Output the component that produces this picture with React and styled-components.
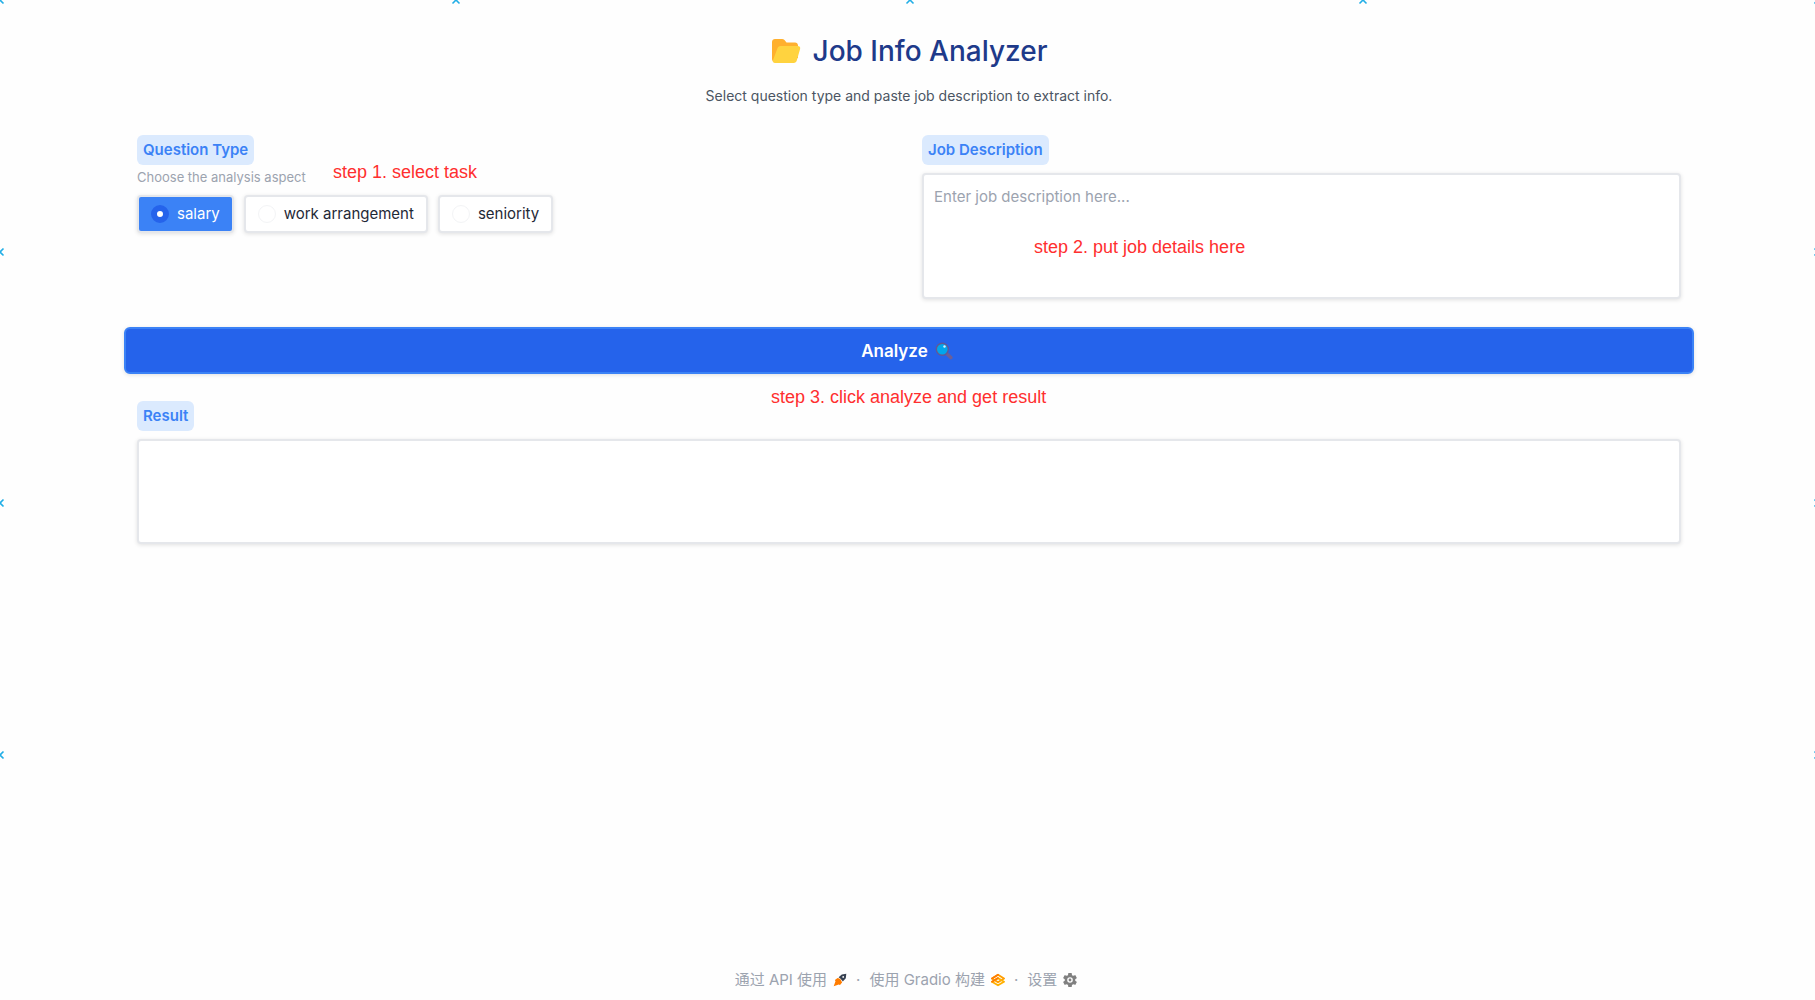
import React, { useState } from "react";
import styled, { createGlobalStyle } from "styled-components";

const GlobalStyle = createGlobalStyle`
  *, *::before, *::after { box-sizing: border-box; }
  body {
    margin: 0;
    background: #fefefe;
    color: #1f2937;
    font-family: Inter, "Noto Sans CJK SC", sans-serif;
    font-size: 15px;
    line-height: 20px;
  }
`;

const Page = styled.div`
  position: relative;
  overflow: hidden;
  min-height: 100vh;
  display: flex;
  flex-direction: column;
  padding: 33px 121px 9px 124px;
`;

const Header = styled.header`
  display: flex;
  flex-direction: column;
  align-items: center;
  gap: 19px;
`;

const Title = styled.h1`
  display: flex;
  align-items: center;
  gap: 12px;
  margin: 0;
  color: #1e3a8a;
  font-size: 28px;
  font-weight: 500;
  line-height: 36px;
`;

const Subtitle = styled.p`
  margin: 0;
  color: #4b5563;
  font-size: 14px;
  line-height: 16px;
`;

const Main = styled.main`
  flex: 1;
  display: flex;
  flex-direction: column;
  margin-top: 31px;
`;

const Columns = styled.div`
  display: grid;
  grid-template-columns: 1fr 1fr;
`;

const Panel = styled.div`
  position: relative;
  display: flex;
  flex-direction: column;
  gap: 8px;
  padding: 0 13px;
`;

const Choices = styled.fieldset`
  position: relative;
  min-width: 0;
  margin: 0;
  padding: 0 13px;
  border: 0;
`;

const badge = `
  width: fit-content;
  padding: 5px 6px;
  border-radius: 6px;
  background: #dbeafe;
  color: #3b82f6;
  font-size: 15px;
  font-weight: 600;
  line-height: 20px;
`;

const Legend = styled.legend`
  ${badge}
`;

const Label = styled.label`
  ${badge}
`;

const Hint = styled.p`
  margin: 2px 0 8px;
  color: #9ca3af;
  font-size: 13px;
  line-height: 20px;
`;

const Options = styled.div`
  display: flex;
  flex-wrap: wrap;
  gap: 10px;
`;

const Option = styled.label`
  display: flex;
  align-items: center;
  gap: 8px;
  height: 38px;
  padding: 0 12px;
  border: 2px solid #e5e7eb;
  border-radius: 4px;
  background: ${(p) => (p.$selected ? "#3b82f6" : "#ffffff")};
  color: ${(p) => (p.$selected ? "#ffffff" : "#1f2937")};
  box-shadow: 0 1px 4px rgba(0, 0, 0, 0.12);
  cursor: pointer;
`;

const Radio = styled.input`
  appearance: none;
  width: 18px;
  height: 18px;
  margin: 0;
  border: 1px solid #f3f4f6;
  border-radius: 50%;
  background: #ffffff;

  &:checked {
    border: 6px solid #2563eb;
  }
`;

const TextBox = styled.textarea`
  display: block;
  width: 100%;
  height: ${(p) => p.$height}px;
  padding: 12px 10px;
  border: 2px solid #e5e7eb;
  border-radius: 4px;
  outline: none;
  resize: none;
  background: #ffffff;
  color: #1f2937;
  box-shadow: 0 1px 4px rgba(0, 0, 0, 0.12);
  font: inherit;

  &::placeholder {
    color: #9ca3af;
    opacity: 1;
  }
`;

const AnalyzeButton = styled.button`
  display: flex;
  align-items: center;
  justify-content: center;
  gap: 7px;
  width: 100%;
  height: 47px;
  margin: 28px 0 27px;
  padding: 0 4px 0 0;
  border: 2px solid #3b82f6;
  border-radius: 6px;
  background: #2563eb;
  color: #ffffff;
  box-shadow: 0 1px 4px rgba(0, 0, 0, 0.12);
  font: inherit;
  font-size: 17px;
  font-weight: 600;
  cursor: pointer;
`;

const Note = styled.span`
  position: absolute;
  top: ${(p) => p.$top}px;
  left: ${(p) => p.$left};
  color: #ff2f2f;
  font-family: "Liberation Sans", Arial, sans-serif;
  font-size: 18px;
  line-height: 20px;
  white-space: nowrap;
  pointer-events: none;
`;

const Footer = styled.footer`
  display: flex;
  justify-content: center;
  align-items: center;
  gap: 9px;
  padding-right: 6px;
  color: #9ca3af;
  line-height: 22px;
`;

const FooterLink = styled.a`
  display: flex;
  align-items: center;
  gap: 6px;
  color: inherit;
  text-decoration: none;
`;

const Mark = styled.svg`
  position: absolute;
  top: ${(p) => p.$y}%;
  left: ${(p) => p.$x}%;
  width: 10px;
  height: 10px;
  margin: -5px 0 0 -5px;
  pointer-events: none;
`;

const marks = [
  [0, 0], [25.1, 0], [50.14, 0], [75.09, 0], [100.15, 0],
  [0, 25.2], [0, 50.3], [0, 75.5],
  [100.15, 25.2], [100.15, 50.3], [100.15, 75.5],
];

const FolderIcon = () => (
  <svg width="30" height="26" viewBox="0 0 30 26" aria-hidden="true">
    <path d="M4 1h7c1 0 1.800.4 2.500 1.100L15.500 4.500H24c1.700 0 3 1.300 3 3V20L4 24c-1.600 0-3-1.300-3-3V4c0-1.700 1.300-3 3-3Z" fill="#ffb02e" />
    <path d="M9.500 8h17.200c1.800 0 2.900 1.300 2.400 3l-3.300 11.500c-.4 1.500-1.500 2.500-3.100 2.500H4c-1.500 0-2.500-1-2.200-2.200L6.400 10.400C6.900 8.900 8 8 9.500 8Z" fill="#ffd33f" />
  </svg>
);

const SearchIcon = () => (
  <svg width="18" height="18" viewBox="0 0 18 18" aria-hidden="true">
    <path d="m11.300 11.300 4.500 4.200" stroke="#6b5f98" strokeWidth="3.600" strokeLinecap="round" />
    <circle cx="7.300" cy="7.300" r="6" fill="#00a6ed" stroke="#635994" strokeWidth="1.400" />
    <circle cx="9.500" cy="4.500" r="1.200" fill="#d8f2ff" />
  </svg>
);

const RocketIcon = () => (
  <svg width="14" height="14" viewBox="0 0 14 14" aria-hidden="true">
    <path d="M13.300.7 8.800 1.400 5.600 4.300 7 5.200l1.900 2L9.800 8.500l3-3.300Z" fill="#374151" />
    <circle cx="10.200" cy="3.900" r=".9" fill="#ffffff" />
    <path d="M4.600 4.900 1.900 7l.6 1.300L.7 13.300l5-1.700 1.300.5 2.100-2.700-1.300-2.700-1.500-1.300Z" fill="#ff7c00" />
  </svg>
);

const GradioIcon = () => (
  <svg width="14" height="14" viewBox="0 0 14 14" fill="none" aria-hidden="true">
    <path d="m1 5.500 6-3.700 6 3.700-6 3.700Z" stroke="#ff9d00" strokeWidth="1.900" strokeLinejoin="round" />
    <path d="m1 8.700 6 3.500 6-3.500-6-3.600Z" stroke="#ffb000" strokeWidth="1.900" strokeLinejoin="round" />
    <path d="m1 5.500 6-3.700M1 8.700 7 5.100" stroke="#ff7c00" strokeWidth="1.700" strokeLinecap="round" />
  </svg>
);

const GearIcon = () => (
  <svg width="14" height="14" viewBox="2 2 20 20" aria-hidden="true">
    <path fill="#808080" fillRule="evenodd" d="M19.430 12.980c.04-.32.07-.64.07-.98s-.03-.66-.07-.98l2.110-1.650c.19-.15.24-.42.12-.64l-2-3.460c-.12-.22-.39-.3-.61-.22l-2.490 1c-.52-.4-1.080-.73-1.690-.98l-.38-2.650A.5.5 0 0 0 14 2h-4a.5.5 0 0 0-.49.420l-.38 2.650c-.61.250-1.170.590-1.690.98l-2.490-1a.5.5 0 0 0-.61.220l-2 3.460c-.13.220-.07.490.12.640l2.110 1.650c-.04.320-.07.650-.07.980s.03.660.07.980l-2.110 1.650a.5.5 0 0 0-.12.640l2 3.460c.12.220.39.300.61.220l2.490-1c.52.400 1.080.730 1.690.980l.38 2.650c.03.240.24.420.49.420h4c.25 0 .46-.18.49-.42l.38-2.650c.61-.25 1.170-.59 1.690-.98l2.490 1c.23.090.49 0 .61-.22l2-3.460a.5.5 0 0 0-.12-.64ZM12 16a4 4 0 1 1 0-8 4 4 0 0 1 0 8Z" />
    <circle cx="12" cy="12" r="2" fill="#808080" />
  </svg>
);

const tasks = ["salary", "work arrangement", "seniority"];

export default function App() {
  const [task, setTask] = useState("salary");
  const [description, setDescription] = useState("");

  return (
    <Page>
      <GlobalStyle />
      <Header>
        <Title>
          <FolderIcon />
          Job Info Analyzer
        </Title>
        <Subtitle>Select question type and paste job description to extract info.</Subtitle>
      </Header>

      <Main>
        <Columns>
          <Choices>
            <Legend>Question Type</Legend>
            <Hint>Choose the analysis aspect</Hint>
            <Options>
              {tasks.map((name) => (
                <Option key={name} $selected={task === name}>
                  <Radio
                    type="radio"
                    name="task"
                    value={name}
                    checked={task === name}
                    onChange={() => setTask(name)}
                  />
                  {name}
                </Option>
              ))}
            </Options>
            <Note $top={-3} $left="209px">step 1. select task</Note>
          </Choices>
          <Panel>
            <Label htmlFor="description">Job Description</Label>
            <TextBox
              id="description"
              $height={126}
              placeholder="Enter job description here..."
              value={description}
              onChange={(e) => setDescription(e.target.value)}
            />
            <Note $top={102} $left="125px">step 2. put job details here</Note>
          </Panel>
        </Columns>

        <AnalyzeButton type="button">
          Analyze
          <SearchIcon />
        </AnalyzeButton>

        <Panel>
          <Label htmlFor="result">Result</Label>
          <TextBox id="result" $height={105} readOnly />
          <Note $top={-14} $left="calc(50% - 138px)">step 3. click analyze and get result</Note>
        </Panel>
      </Main>

      <Footer>
        <FooterLink href="#api">通过 API 使用 <RocketIcon /></FooterLink>
        <span>·</span>
        <FooterLink href="#gradio">使用 Gradio 构建 <GradioIcon /></FooterLink>
        <span>·</span>
        <FooterLink href="#settings">设置 <GearIcon /></FooterLink>
      </Footer>

      {marks.map(([x, y]) => (
        <Mark key={`${x}-${y}`} $x={x} $y={y} viewBox="0 0 10 10" aria-hidden="true">
          <path d="m1.500 1.500 7 7m0-7-7 7" stroke="#22aee6" strokeWidth="1.600" />
        </Mark>
      ))}
    </Page>
  );
}
